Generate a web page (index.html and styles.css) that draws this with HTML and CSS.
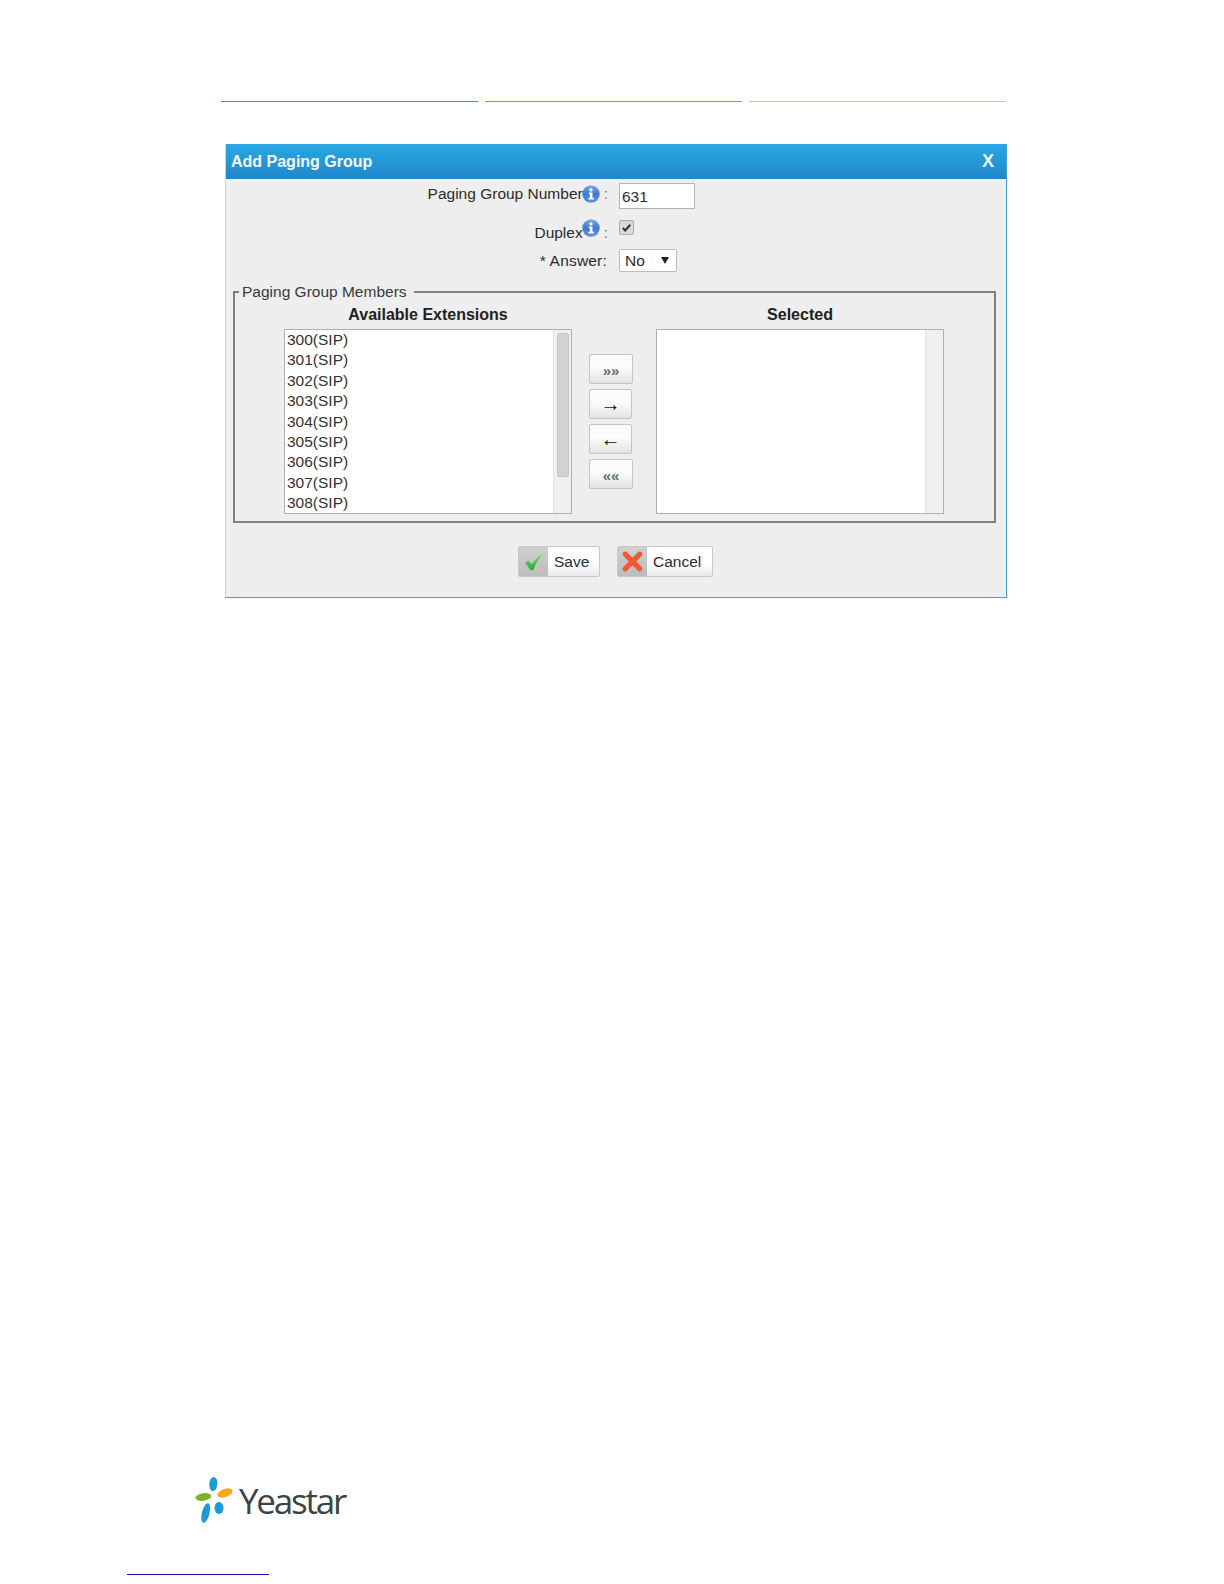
FILE: index.html
```html
<!DOCTYPE html>
<html lang="en">
<head>
<meta charset="utf-8">
<title>Add Paging Group</title>
<link rel="stylesheet" href="styles.css">
</head>
<body>
<svg class="defs" width="0" height="0" aria-hidden="true">
  <defs>
    <linearGradient id="infoFill" x1="0" y1="0" x2="0" y2="1">
      <stop offset="0" stop-color="#7ba9e6"/>
      <stop offset="0.5" stop-color="#3f78d2"/>
      <stop offset="1" stop-color="#5f95de"/>
    </linearGradient>
    <linearGradient id="checkFill" x1="0" y1="0" x2="0" y2="1">
      <stop offset="0" stop-color="#7fdc5a"/>
      <stop offset="1" stop-color="#1fae3c"/>
    </linearGradient>
    <symbol id="infoIcon" viewBox="0 0 18 18">
      <circle cx="9" cy="9" r="8.700" fill="url(#infoFill)"/>
      <circle cx="9" cy="4.900" r="1.700" fill="#fff"/>
      <path d="M6.800 7.500h3.700v5.300h1.300v1.700H6.400v-1.700h1.500V9.200H6.800z" fill="#fff"/>
    </symbol>
  </defs>
</svg>
<div class="page">
  <div class="bands">
    <span class="band band-blue"></span>
    <span class="band band-green"></span>
    <span class="band band-yellow"></span>
  </div>
  <section class="dialog">
    <header class="dialog-head"><span>Add Paging Group</span><span class="close">X</span></header>
    <div class="form-row row-number">
      <div class="label">Paging Group Number<svg class="info"><use href="#infoIcon"/></svg><span class="colon">:</span></div>
      <div class="text-input">631</div>
    </div>
    <div class="form-row row-duplex">
      <div class="label"><span class="duplex-text">Duplex</span><svg class="info info-duplex"><use href="#infoIcon"/></svg><span class="colon">:</span></div>
      <div class="checkbox"><svg viewBox="0 0 14 14"><path d="M3 7.500l2.600 2.700L11 4" fill="none" stroke="#333" stroke-width="2.200"/></svg></div>
    </div>
    <div class="form-row row-answer">
      <div class="label answer-label">* Answer:</div>
      <div class="select"><span>No</span><span class="caret"></span></div>
    </div>
    <fieldset class="members">
      <legend>Paging Group Members</legend>
      <div class="columns">
        <div class="list-col">
          <div class="col-title">Available Extensions</div>
          <div class="listbox">
            <ul class="items">
              <li>300(SIP)</li><li>301(SIP)</li><li>302(SIP)</li><li>303(SIP)</li><li>304(SIP)</li><li>305(SIP)</li><li>306(SIP)</li><li>307(SIP)</li><li>308(SIP)</li>
            </ul>
            <div class="track"><div class="thumb"></div></div>
          </div>
        </div>
        <div class="moves">
          <div class="move move-wide mark">»»</div>
          <div class="move arrow">→</div>
          <div class="move arrow">←</div>
          <div class="move move-wide mark">««</div>
        </div>
        <div class="list-col">
          <div class="col-title">Selected</div>
          <div class="listbox">
            <ul class="items"></ul>
            <div class="track"></div>
          </div>
        </div>
      </div>
    </fieldset>
    <div class="actions">
      <div class="action action-save">
        <span class="action-icon"><svg viewBox="0 0 20 18" width="20" height="18"><path d="M1 9.500l3.500-2 3.300 3.800C10.500 7 14 3.500 19 1c-4 4-7.500 9.500-9.500 16H6.500z" fill="url(#checkFill)"/></svg></span>
        <span class="action-text">Save</span>
      </div>
      <div class="action action-cancel">
        <span class="action-icon"><svg viewBox="0 0 22 22" width="23" height="23"><path d="M4 4l14 14M18 4L4 18" fill="none" stroke="#ee5b30" stroke-width="5" stroke-linecap="round"/></svg></span>
        <span class="action-text">Cancel</span>
      </div>
    </div>
  </section>
  <div class="logo">
    <svg class="logo-mark" viewBox="0 0 40 48" width="40" height="48">
      <ellipse cx="18.300" cy="8" rx="4" ry="7" fill="#1b9ad6" transform="rotate(5 18.300 8)"/>
      <ellipse cx="30" cy="17" rx="8" ry="4" fill="#f5a81c" transform="rotate(-20 30 17)"/>
      <ellipse cx="8.300" cy="21" rx="8" ry="3.800" fill="#7cb32b" transform="rotate(-8 8.300 21)"/>
      <ellipse cx="24" cy="32" rx="4.500" ry="6" fill="#1b9ad6"/>
      <ellipse cx="10.700" cy="37" rx="3.800" ry="10" fill="#1b9ad6" transform="rotate(14 10.700 37)"/>
    </svg>
    <span class="logo-text">Yeastar</span>
  </div>
  <div class="foot-rule"></div>
</div>
</body>
</html>
```
FILE: styles.css
```css
* { box-sizing: border-box; }
html, body { margin: 0; padding: 0; background: #fff; }
body { font-family: "Liberation Sans", Arial, sans-serif; color: #2b2b2b; }
.defs { position: absolute; }
.page { width: 1224px; height: 1584px; overflow: hidden; padding-top: 101px; }

.bands { display: flex; gap: 7px; margin-left: 221px; width: 785px; }
.band { flex: 1; height: 1px; }
.band-blue { background: #2b9ad8; }
.band-green { background: #8ea63c; }
.band-yellow { background: #efc94e; }

.dialog {
  width: 782px; height: 454px; margin: 42px 0 0 225px;
  background: #eee; border: 1px solid #3f9fd8; border-top: 0; border-left-color: #bcd9ec;
  font-size: 15.500px;
}
.dialog-head {
  height: 35px; padding: 0 12px 0 5px;
  display: flex; align-items: center; justify-content: space-between;
  background: linear-gradient(#29a8e4, #2187c9);
  color: #f4f9fc; font-weight: 700; font-size: 16px;
}
.close { font-size: 18px; }

.form-row { display: flex; align-items: flex-start; gap: 11px; }
.label { width: 382px; display: flex; justify-content: flex-end; align-items: flex-start; line-height: 18px; white-space: nowrap; }
.colon { margin-left: 4px; color: #777; }
.info { width: 18px; height: 18px; flex: none; margin-left: -1px; }
.row-number { padding-top: 4px; }
.row-number .label { padding-top: 2px; }
.row-duplex { margin-top: 11px; }
.duplex-text { margin-top: 4px; }
.row-duplex .colon { margin-top: 4px; }
.info-duplex { margin-top: -1px; }
.row-answer { margin-top: 7px; }
.row-answer .label { padding-top: 3px; }
.answer-label { letter-spacing: 0.200px; padding-right: 1px; }

.text-input {
  width: 76px; height: 26px; padding: 4px 2px 0;
  background: #fff; border: 1px solid #b5b5b5; line-height: 18px;
}
.checkbox {
  width: 15px; height: 15px; background: #d9d9d9;
  border: 1px solid #aaa; border-radius: 2px;
}
.checkbox svg { display: block; width: 13px; height: 13px; }
.select {
  width: 58px; height: 23px; padding: 0 5px; display: flex; align-items: center; justify-content: space-between;
  background: #fff; border: 1px solid #bbb; border-radius: 2px;
}
.caret { width: 0; height: 0; border-left: 4px solid transparent; border-right: 4px solid transparent; border-top: 7px solid #222; margin-right: 2px; }

.members {
  margin: 11px 0 0 7px; width: 763px; height: 240px; padding: 0;
  border: 2px solid #808080; min-width: 0;
}
.members legend { margin-left: 4px; padding: 0 7px 0 3px; line-height: 17px; color: #3a3a3a; }
.columns { display: flex; align-items: flex-start; padding-left: 49px; margin-top: 5px; }
.list-col { width: 288px; }
.col-title { text-align: center; font-weight: 700; font-size: 16px; line-height: 20px; height: 20px; margin-bottom: 4px; color: #222; }
.listbox { height: 185px; display: flex; background: #fff; border: 1px solid #b0b0b0; overflow: hidden; }
.items { flex: 1; list-style: none; margin: 0; padding: 0 0 0 2px; }
.items li { height: 20.400px; line-height: 20.400px; white-space: nowrap; color: #333; }
.track { width: 18px; flex: none; background: #f0f0f0; border-left: 1px solid #e2e2e2; padding: 3px 2px 0 3px; }
.thumb { height: 144px; background: #d2d2d2; border: 1px solid #c6c6c6; border-radius: 2px; }

.moves { width: 84px; padding: 49px 0 0 17px; display: flex; flex-direction: column; gap: 5px; flex: none; }
.move {
  width: 43px; height: 30px; display: flex; align-items: center; justify-content: center;
  background: linear-gradient(#fbfbfb 45%, #e3e3e3); border: 1px solid #c4c4c4; border-radius: 2px;
  line-height: 1;
}
.move-wide { width: 44px; }
.mark { color: #5f7078; font-size: 15px; font-weight: 700; padding-top: 3px; }
.arrow { color: #111; font-size: 20px; padding-bottom: 1px; }

.actions { display: flex; gap: 17px; margin: 23px 0 0 292px; }
.action { height: 31px; display: flex; border: 1px solid #c8c8c8; border-radius: 2px; background: linear-gradient(#fff 55%, #e8e8e8); }
.action-save { width: 82px; }
.action-cancel { width: 96px; }
.action-icon { width: 29px; flex: none; display: flex; align-items: center; justify-content: center; background: linear-gradient(#d0d0d0, #bcbcbc); }
.action-text { padding-left: 6px; line-height: 29px; color: #2b2b3b; }

.logo { display: flex; align-items: center; gap: 4px; margin: 878px 0 0 195px; height: 48px; }
.logo-mark { flex: none; }
.logo-text { font-family: "Open Sans", sans-serif; font-weight: 500; font-size: 35px; letter-spacing: -2.200px; line-height: 48px; color: #3b4347; padding-top: 2px; }
.foot-rule { width: 142px; height: 1px; margin: 50px 0 0 127px; background: #1010a8; }
```
